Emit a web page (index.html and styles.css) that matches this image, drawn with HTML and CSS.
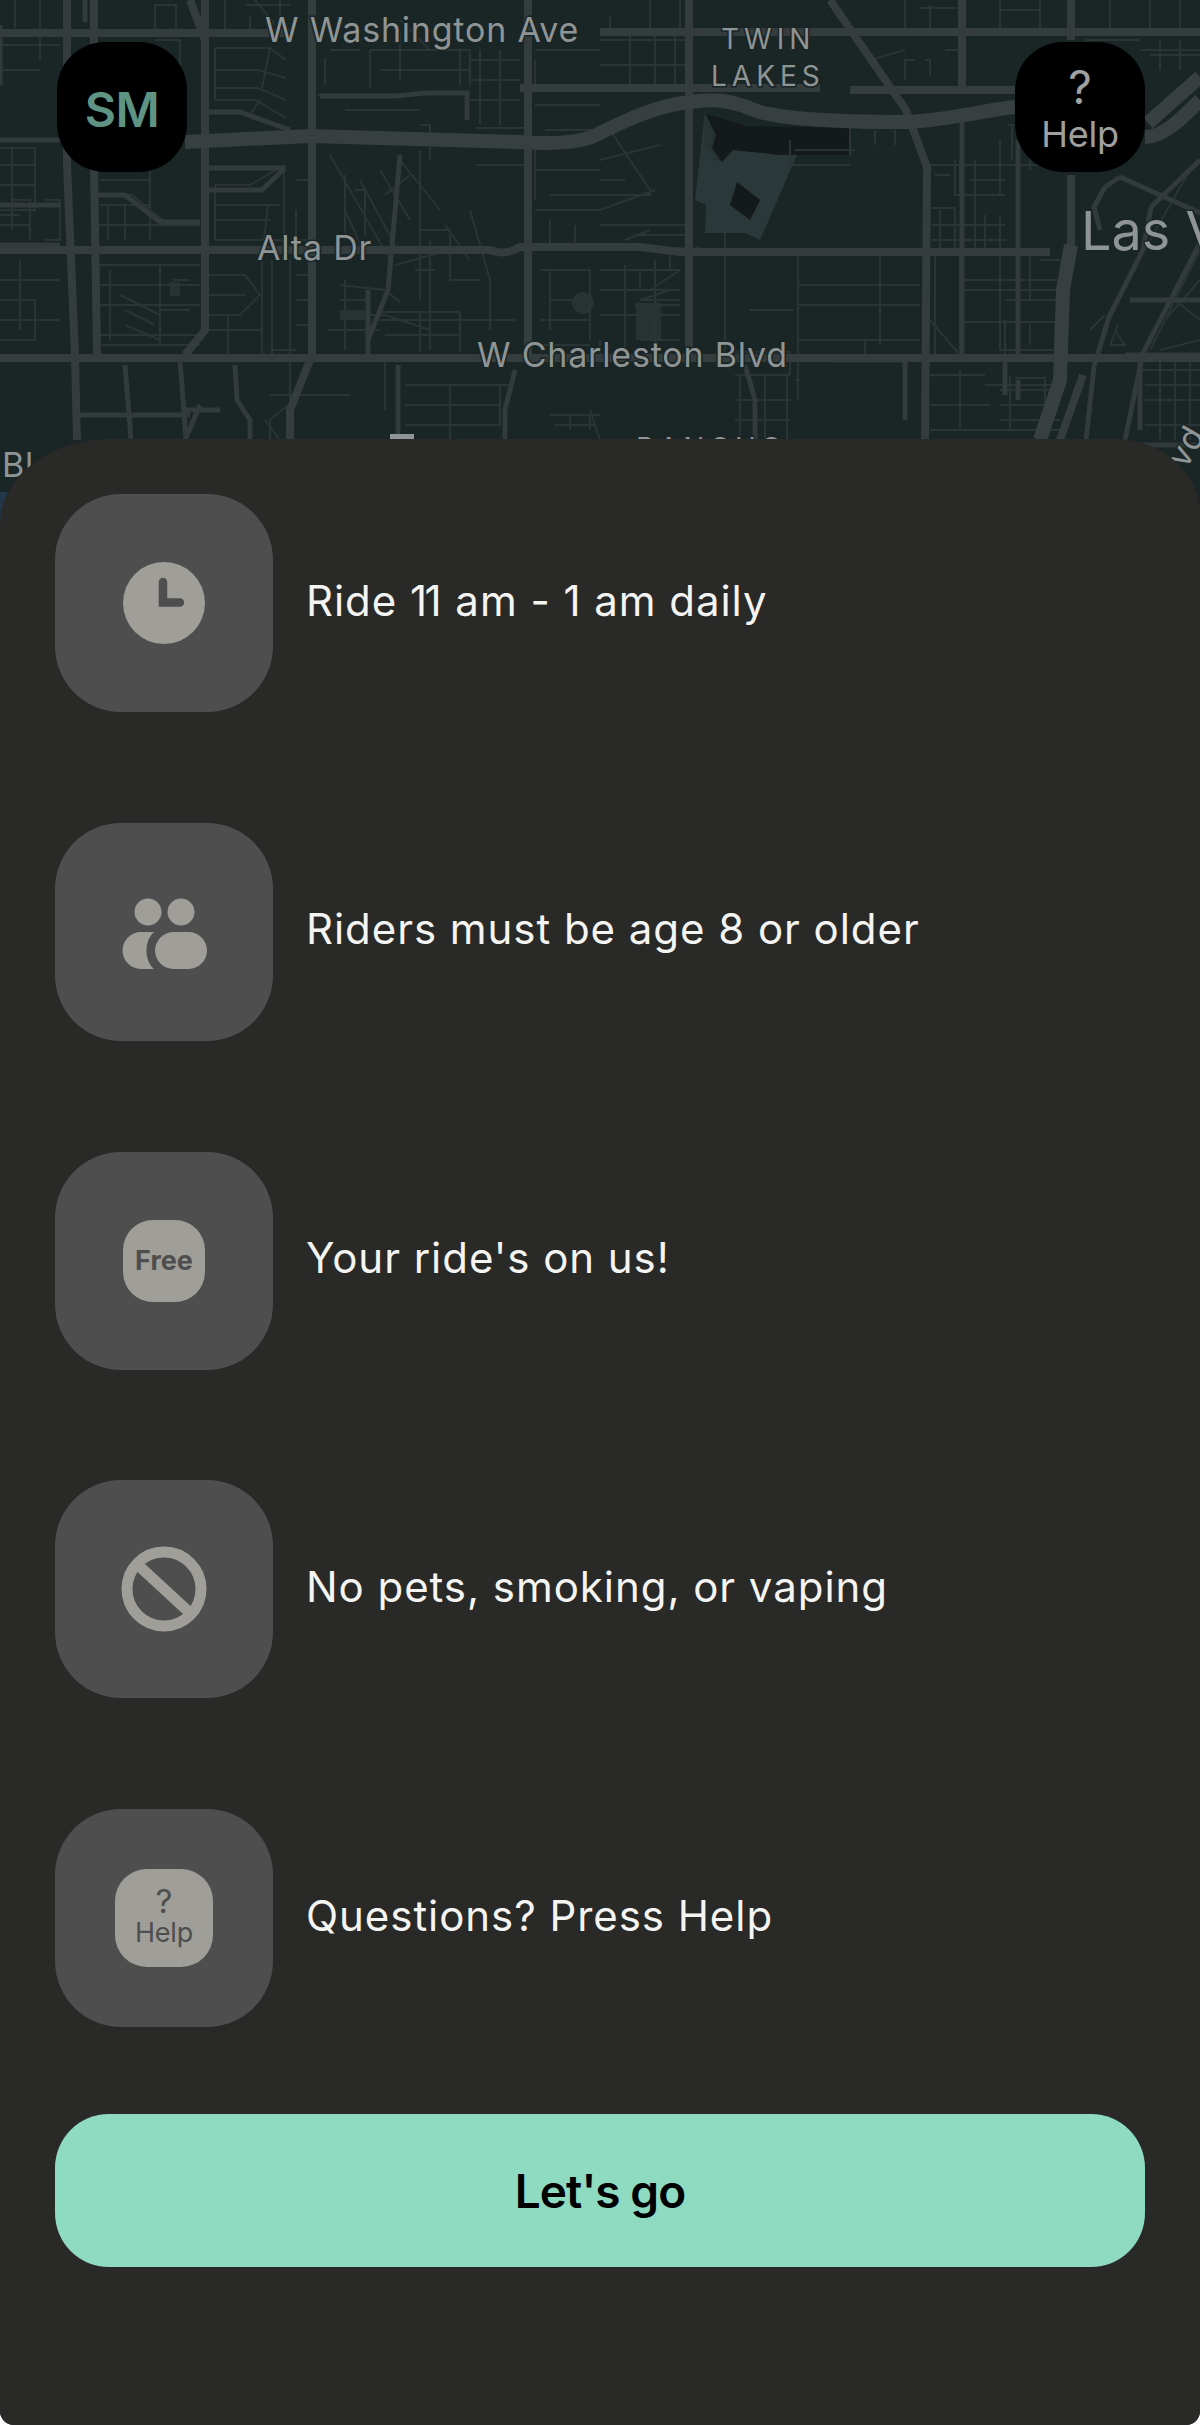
FILE: index.html
```html
<!DOCTYPE html>
<html lang="en">
<head>
<meta charset="utf-8">
<title>Welcome</title>
<link rel="stylesheet" href="styles.css">
</head>
<body>
<main class="screen">
  <svg class="map" viewBox="0 0 1200 540" width="1200" height="540" aria-hidden="true">
    <rect class="water" x="0" y="492" width="9" height="30"/>
    <path class="park" d="M705 112 L742 128 L800 148 L760 240 L745 233 L705 233 L706 205 L695 200 Z"/>
    <path class="lot" d="M704 115 L744 127 L720 145 L712 160 L725 162 L705 148 Z"/>
    <path class="dark" d="M705 113 L745 126 L850 128 L851 155 L780 155 L733 150 L722 162 L712 148 L716 135 Z"/>
    <path class="dark" d="M737 182 L760 200 L750 220 L730 205 Z"/>
    <path class="lot" d="M636 303 H661 V340 H636 Z M340 310 H365 V320 H340 Z M170 282 H180 V296 H170 Z"/>
    <circle class="lot" cx="583" cy="303" r="11"/>

    <path class="minor" d="M15 0V28M40 0V28M60 45H0M40 28V60M0 70H40M155 5H176V35H155ZM0 148H35V210H0M12 148V230M35 165H0M35 185H0M45 200H60V240H45M12 200H30V240M0 225H30M0 215H20
      M100 180H150V240M108 205V240M125 205V240M100 205H150M150 190V160M96 195H132L165 222H200M96 225H200
      M95 265H200M100 285H200M100 305H200M100 335H200M173 280H190M110 270V340M160 265V345M160 310H190M120 295L160 315M125 325L160 340M125 310L155 325M0 280H60M20 260V330M0 300H35V340H0M0 320H60M100 345H200
      M225 0V30M215 48H270L286 60M215 70H258L286 78M215 88H258L286 100M215 100H255L286 118M215 48V100M270 48L262 88M260 100L250 115M155 40H180V70H155M140 100H176
      M215 185H250L285 165M215 205H280M215 220H270M215 240H285M215 185V240M268 205L264 240M284 165V240M205 275H245L260 295L240 315H205M205 295H245M205 330H262M228 315V355M262 260V355M272 260V355M290 260V355M296 210V240M296 275H312M296 300H312M296 325H312M296 240H312M296 180H312
      M246 5H290M250 15V35M255 0L275 25M280 0V30M318 95H420M325 58V85M370 50H440M370 50V88M380 70H440M400 30V80M440 50H470V85M330 50H360M345 110H420M400 20L430 50M460 48V85M430 70H470M480 50V125M500 50V125M470 60H520M470 80H520M470 100H520M476 128H528V165H476
      M330 155L390 260M345 175V240M345 210L365 255M355 190H365V235M360 180L395 245M380 170L410 220M400 160L440 210M385 195L410 175M430 240V350M430 160V125H420M420 150V300M420 230H450V280H480M445 225L470 260M450 250H490M470 210L490 280V330M415 270H435M395 265L450 250
      M340 285L385 290L400 302M340 300H370M328 330H380M340 315H385L430 330M380 320H515M345 280V350M385 360V410M380 312H460M420 312V352M460 312V352M385 335H460M270 350H296M270 395H350M290 345V430M300 395L270 420V440M265 420L280 440H290
      M405 385H510M405 405H500M405 425H500M405 450H500M450 385V440M500 385V425H470M550 415H600M570 415V430M590 415V430M555 425H595
      M535 50H600M535 60V85M535 105H600M545 130H600M535 150V200M535 170H600M550 195H600M535 210H600M550 220V250M575 225V250M540 270H590V340M550 300H590M540 320H590M550 270V330M535 345H590M600 340V360M590 410L600 440M440 475H525"/>
    <path class="minor" d="M600 40H690M600 65H690M630 30V85M655 30V85M675 35V85M610 15V30M650 0V30M680 0V30
      M600 180H625M600 160L660 145M655 190L600 210M610 130L650 190V195H600M600 225H690M640 235H688M600 270H680M600 290H680M600 315H680M625 265V355M655 265V355M650 290L680 270M640 300L670 290M625 240L650 230
      M655 260V285M670 250V270M640 270V290M640 340H680M635 305H680
      M725 233V355M732 352H790V375M798 252V400M798 285H920M798 305H920M798 340H920M880 255V345M865 340V355M800 380H795M680 300H640M750 310H794M735 375H790M735 420H790M735 400H790M740 375V440M765 375V440M787 375V440
      M790 165H850M850 128V155M855 150H795M790 140V165M860 128H910M875 130V145M895 130V145
      M930 165H1000M935 165H955V195M935 175H950M955 160V195H1005M975 160V195M1000 160V195M970 180H1005M960 160V195
      M932 208H955V250M940 210V250M975 195V255M985 215V250M1000 215V250M932 240H1005M932 225H1005
      M935 255V355M960 255V350M1000 255V350M960 280H1060M960 290H1060M1005 300H1060M960 322H1060M1000 350H1060M1030 255V300M1060 260H1040
      M930 320L960 355M1005 320V355M1030 325V345M1010 375V430M1000 390H1060M1000 405H1060M1000 420H1060M985 385H1060M930 375H985M930 405H990M930 430H1060M1015 378H1045V420M960 370V430
      M1070 0V30M1110 0V30M1150 0V30M1180 0V30M1085 40H1140M1140 50H1200M1160 40V70M1180 40V70M1150 55H1200
      M930 5V30M905 0V28M960 8H920M1000 0V28M1040 10H1000M1040 0V28M905 50L870 60M915 60H905V80M925 60H930V75M945 50H960
      M1000 140V170M1030 122V170M1055 120V170M1008 125H1060M1000 165H1060M1012 125V160M1040 150H1060
      M1190 170L1150 240M1170 200L1200 215M1200 250L1150 350M1165 320L1200 280M1175 300L1200 320M1200 340L1160 350
      M1140 370H1200M1145 385H1200M1145 400H1200M1145 425H1200M1160 362V440M1175 362V440M1190 362V440
      M1105 315L1090 330M1115 330L1125 345L1110 345L1118 325"/>

    <path class="street" d="M320 96H395L425 93H467V120M205 112H240L290 130M0 140H60M205 168H265L285 168M205 190H262L285 168M97 195H125L160 222H200M400 155L388 290L368 340V355M368 290V355M515 370L505 410V440M235 365L237 400L250 420V440M398 365V435M200 405L185 440M220 410H185M80 415H190M125 365L131 440M180 360L186 440M745 365L755 400V440M85 0V22M0 85V25M1120 177L1200 213M1105 187L1094 207L1100 230M1120 177L1105 187M1151 207L1143 250L1109 317L1094 367L1086 440M1151 207L1200 160M1200 243L1143 353L1125 440M1140 355V430M1125 355H1200M1005 355V395M905 360H830M0 205H60M0 245H60M700 250H660M1130 300H1200M1100 445H1200M1018 140V355M1018 380V400M962 110V355M905 362V420"/>
    <path class="road" d="M0 33H290M600 32H1200M520 88H600M600 88H820M850 90H1015M0 250H400H490Q505 256 520 247H600H640L680 252H1050M0 358H1200
      M205 0V40M190 0L205 40V330L185 355M94 0V165L97 355M67 0V165L75 355L77 440M312 0V355L290 410V440M528 0V355M689 0V355M962 0V88M1071 0V40M1071 175V250M830 0L906 110L927 167L925 440M1060 440L1083 375"/>
    <path class="high" d="M185 142L310 136L520 142C560 145 585 142 600 133C630 118 660 105 690 102C715 98 730 100 760 112C790 120 850 122 906 122C950 120 985 110 1015 107M1145 137C1165 137 1185 115 1200 100M1148 123L1200 77M1071 245L1063 290L1060 380L1040 440"/>

    <rect class="tick" x="390" y="434" width="24" height="6"/>

    <text class="label" x="265" y="42">W Washington Ave</text>
    <text class="label" x="257" y="260">Alta Dr</text>
    <text class="label" x="477" y="367">W Charleston Blvd</text>
    <text class="label spaced" x="721" y="49">TWIN</text>
    <text class="label spaced" x="711" y="86">LAKES</text>
    <text class="label city" x="1081" y="250">Las Vegas</text>
    <text class="label spaced" x="636" y="458">RANCHO</text>
    <text class="label" x="2" y="477">Bl</text>
    <text class="label" transform="translate(1186 470) rotate(-60)">vd</text>
  </svg>

  <header class="topbar">
    <button class="chip chip-initials">SM</button>
    <button class="chip chip-help"><span class="q">?</span><span class="h">Help</span></button>
  </header>

  <section class="sheet">
    <ul class="rules">
      <li class="rule">
        <span class="tile">
          <svg class="glyph" width="82" height="82" viewBox="0 0 82 82"><circle class="fill" cx="41" cy="41" r="41"/><path class="cut" d="M40 20V40.5H57"/></svg>
        </span>
        <span class="rule-text">Ride <span class="tight">1</span>1 am - 1 am daily</span>
      </li>
      <li class="rule">
        <span class="tile">
          <svg class="glyph people" width="86" height="72" viewBox="0 0 86 72"><circle class="fill" cx="27" cy="14" r="13.5"/><circle class="fill" cx="60" cy="14" r="13.5"/><rect class="fill" x="34" y="34" width="52" height="37" rx="18.5"/><path class="fill" d="M20 34H33C23 43 23 62 33 71H20A18.5 18.5 0 0 1 20 34Z"/></svg>
        </span>
        <span class="rule-text">Riders must be age 8 or older</span>
      </li>
      <li class="rule">
        <span class="tile">
          <span class="badge badge-free">Free</span>
        </span>
        <span class="rule-text">Your ride's on us!</span>
      </li>
      <li class="rule">
        <span class="tile">
          <svg class="glyph" width="86" height="86" viewBox="0 0 86 86"><circle class="ring" cx="43" cy="43" r="37"/><path class="ring" d="M17 19L69 67"/></svg>
        </span>
        <span class="rule-text">No pets, smoking, or vaping</span>
      </li>
      <li class="rule">
        <span class="tile">
          <span class="badge badge-help"><span class="q">?</span><span class="h">Help</span></span>
        </span>
        <span class="rule-text">Questions? Press Help</span>
      </li>
    </ul>
    <button class="cta">Let's go</button>
  </section>
</main>
</body>
</html>
```
FILE: styles.css
```css
* { box-sizing: border-box; }
html, body { margin: 0; padding: 0; background: #fff; }
.screen {
  position: relative;
  width: 1200px;
  height: 2425px;
  overflow: hidden;
  background: #1a2526;
  border-radius: 0 0 14px 14px;
  font-family: Inter, "Liberation Sans", sans-serif;
}
.map { position: absolute; top: 0; left: 0; }
.water { fill: #22384a; }
.park { fill: #2a3839; }
.lot { fill: #273233; }
.dark { fill: #14191a; }
.minor { fill: none; stroke: #2a3435; stroke-width: 2; }
.street { fill: none; stroke: #323a3b; stroke-width: 5; }
.road { fill: none; stroke: #343c3d; stroke-width: 8; }
.high { fill: none; stroke: #373f40; stroke-width: 14; }
.tick { fill: #8f9494; }
.label {
  font-family: Inter, "Liberation Sans", sans-serif;
  font-size: 34px;
  letter-spacing: 0.8px;
  fill: #8f9494;
  stroke: #1a2526;
  stroke-width: 3px;
  paint-order: stroke;
}
.spaced { font-size: 28px; letter-spacing: 5px; }
.city { font-size: 54px; letter-spacing: 0; }

.topbar {
  position: relative;
  display: flex;
  justify-content: space-between;
  height: 439px;
  padding: 42px 55px 0 57px;
}
.chip {
  display: flex;
  flex-direction: column;
  align-items: center;
  justify-content: center;
  width: 130px;
  height: 130px;
  padding: 0;
  border: 0;
  border-radius: 48px;
  background: #000;
  font-family: inherit;
}
.chip-initials { padding-top: 5px; color: #5f9484; font-size: 48px; font-weight: 600; letter-spacing: -0.5px; }
.chip-help { padding-top: 2px; color: #a0a0a0; }
.chip-help .q { font-size: 46px; line-height: 52px; }
.chip-help .h { font-size: 36px; line-height: 42px; letter-spacing: -0.3px; }

.sheet {
  position: relative;
  height: 1986px;
  padding: 55px 55px 0;
  background: #292928;
  border-radius: 110px 85px 0 0 / 85px 75px 0 0;
}
.rules {
  display: flex;
  flex-direction: column;
  gap: 110.75px;
  margin: 0;
  padding: 0;
  list-style: none;
}
.rule { display: flex; align-items: center; gap: 33px; }
.tile {
  display: flex;
  align-items: center;
  justify-content: center;
  flex: none;
  width: 218px;
  height: 218px;
  border-radius: 66px;
  background: #4e4e4e;
}
.glyph { display: block; }
.people { margin-top: 5px; }
.fill { fill: #a09e99; }
.cut { fill: none; stroke: #4e4e4e; stroke-width: 8.5; stroke-linecap: round; }
.ring { fill: none; stroke: #a09e99; stroke-width: 11; }
.rule-text { padding-bottom: 6px; color: #f4f4f2; font-size: 42px; font-weight: 400; letter-spacing: 0.95px; }
.tight { letter-spacing: -2.5px; }
.badge {
  display: flex;
  flex-direction: column;
  align-items: center;
  justify-content: center;
  background: #a09e99;
  color: #4e4e4e;
}
.badge-free { width: 82px; height: 82px; border-radius: 30px; font-size: 27px; font-weight: 700; }
.badge-help { width: 98px; height: 98px; padding-bottom: 4px; border-radius: 32px; }
.badge-help .q { font-size: 33px; line-height: 34px; }
.badge-help .h { font-size: 27px; line-height: 30px; letter-spacing: -0.2px; }
.cta {
  display: block;
  width: 1090px;
  height: 153px;
  margin-top: 87px;
  padding: 0;
  border: 0;
  border-radius: 54px;
  background: #8edbc2;
  color: #000;
  font-family: inherit;
  font-size: 46px;
  font-weight: 600;
  letter-spacing: -0.9px;
}
```
